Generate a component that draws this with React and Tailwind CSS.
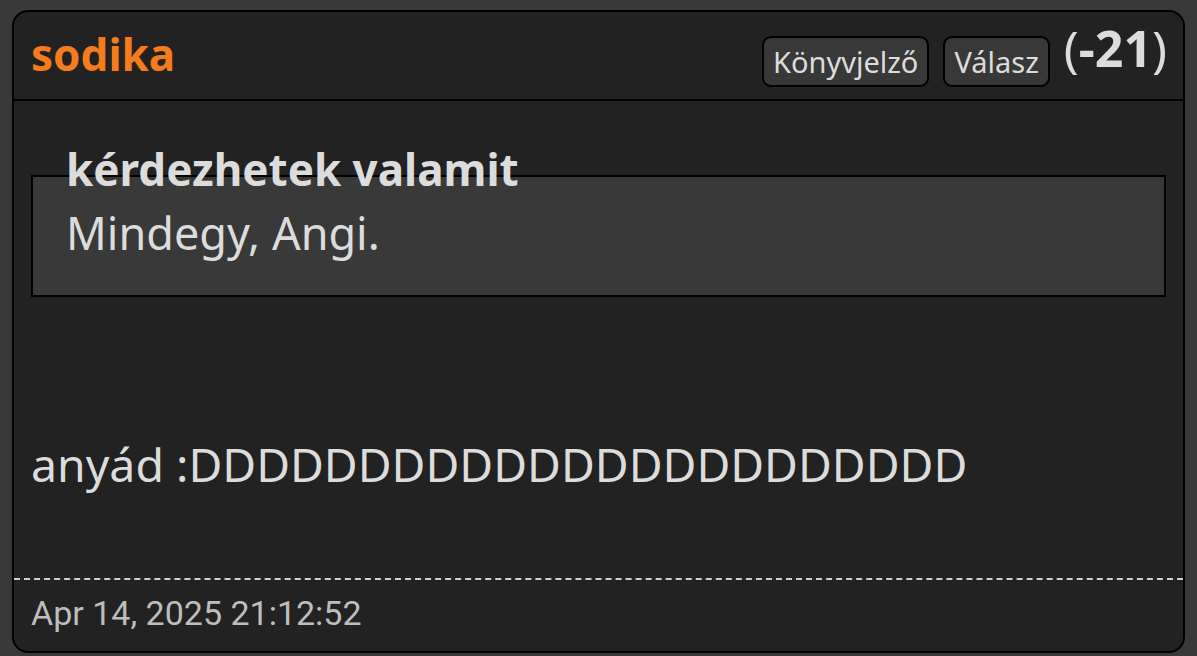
import React from 'react';

const font = { fontFamily: '"Noto Sans", "Open Sans", sans-serif' };

export default function App() {
  return (
    <div className="w-[1197px] h-[656px] bg-[#393939] pt-[10px] px-[12px] pb-[3px]" style={font}>
      <div className="h-full flex flex-col bg-[#222222] border-2 border-black rounded-[16px] overflow-hidden">
        {/* Header */}
        <div className="h-[89px] shrink-0 flex items-center justify-between pl-[17px] pr-[16px] border-b-2 border-black">
          <span className="text-[44px] font-bold text-[#f47c1c] leading-none -mt-[4px]">sodika</span>
          <div className="flex items-center gap-[14px] mt-[12px]">
            <button className="h-[51px] px-[9px] bg-[#383838] border-2 border-black rounded-[9px] text-[29px] leading-none text-[#dcdcdc]">
              Könyvjelző
            </button>
            <button className="h-[51px] px-[9px] bg-[#383838] border-2 border-black rounded-[9px] text-[29px] leading-none text-[#dcdcdc]">
              Válasz
            </button>
            <span className="text-[50px] text-[#dcdcdc] leading-none -mt-[28px]">
              (<span className="font-bold">-21</span>)
            </span>
          </div>
        </div>

        {/* Body */}
        <div className="flex-1 flex flex-col px-[17px]">
          <div className="mt-[74px] h-[122px] bg-[#393939] border-2 border-black pl-[33px]">
            <div className="-mt-[34px] text-[44px] leading-[52px] font-bold text-[#dcdcdc]">kérdezhetek valamit</div>
            <div className="mt-[12px] text-[45px] leading-[52px] text-[#dcdcdc]">Mindegy, Angi.</div>
          </div>
          <div className="mt-[140px] text-[46.4px] leading-[54px] text-[#dcdcdc]">anyád :DDDDDDDDDDDDDDDDDDDDDDD</div>
        </div>

        {/* Footer */}
        <div className="shrink-0 border-t-2 border-dashed border-[#d0d0d0] h-[73px] px-[17px] pt-[8px]">
          <span className="text-[34px] text-[#bdbdbd]" style={{ fontFamily: 'Roboto, sans-serif' }}>
            Apr 14, 2025 21:12:52
          </span>
        </div>
      </div>
    </div>
  );
}
